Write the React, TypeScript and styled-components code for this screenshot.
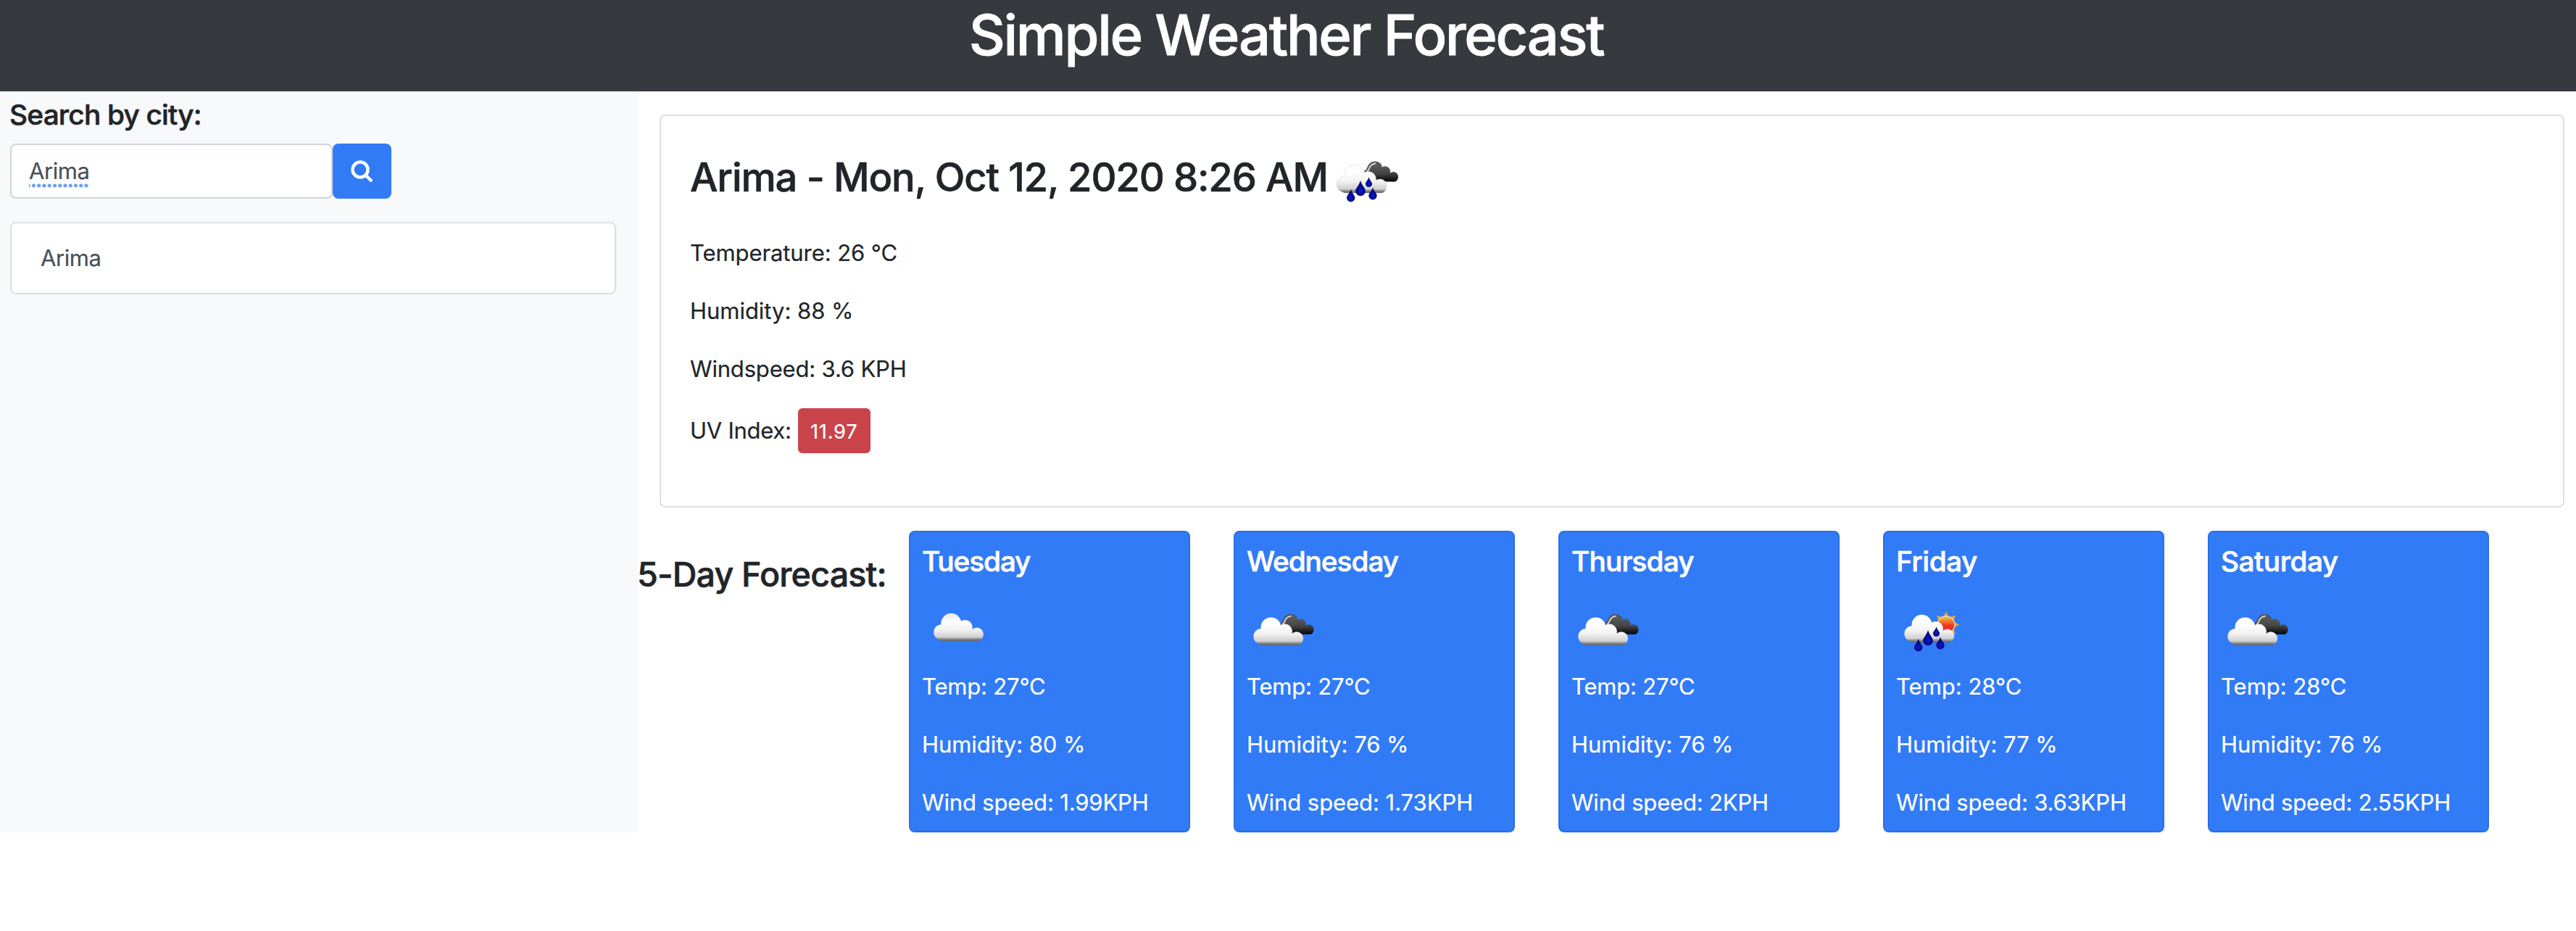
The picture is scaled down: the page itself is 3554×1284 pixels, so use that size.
import React from 'react';
import styled, { createGlobalStyle } from 'styled-components';

const GlobalStyle = createGlobalStyle`
  * { box-sizing: border-box; }
  body {
    margin: 0;
    background: #fff;
    color: #212529;
    font-family: Inter, "Liberation Sans", sans-serif;
    font-size: 31px;
    line-height: 48px;
    -webkit-text-stroke: 0.2px currentColor;
  }
  h1, h3, h4, h5, p { margin: 0; }
  h3, h4, h5 { -webkit-text-stroke: 0.6px currentColor; }
`;

type Tracked = { $track?: number };

const Header = styled.header`
  height: 126px;
  background: #363a3e;
  color: #fff;
  text-align: center;
`;

const Title = styled.h1`
  padding-right: 5px;
  font-size: 77.6px;
  font-weight: 500;
  line-height: 96px;
  letter-spacing: -2.27px;
  -webkit-text-stroke: 0.8px currentColor;
`;

const Layout = styled.main`
  display: flex;
  height: 1022px;
`;

const Sidebar = styled.aside`
  width: 880px;
  flex: none;
  padding: 8px 30px 0 14px;
  background: #f8f9fb;
`;

const SearchTitle = styled.h5`
  margin: 0 0 16px -1px;
  font-size: 38.8px;
  font-weight: 500;
  letter-spacing: -0.8px;
`;

const SearchRow = styled.form`
  display: flex;
  height: 76px;
`;

const Field = styled.div`
  width: 445px;
  padding: 12px 24px;
  border: 2px solid #ced4da;
  border-radius: 8px;
  background: #fff;
  color: #495057;
  letter-spacing: -0.45px;
`;

const Suggested = styled.span`
  display: inline-block;
  height: 48px;
  background: radial-gradient(circle at 3.5px 3px, #6a9ef5 2.2px, transparent 2.9px) 3px 41px / 7.25px 7px repeat-x;
`;

const SearchButton = styled.button`
  display: flex;
  align-items: center;
  justify-content: center;
  width: 81px;
  padding: 0;
  border: 0;
  border-radius: 8px;
  background: #317bf7;
`;

const HistoryItem = styled.div`
  height: 100px;
  margin-top: 32px;
  padding: 24px 40px;
  border: 2px solid #dfdfdf;
  border-radius: 8px;
  background: #fff;
  color: #495057;
  letter-spacing: -0.45px;
`;

const Content = styled.section`
  flex: 1;
  padding: 32px 0 0;
`;

const Current = styled.article`
  height: 542px;
  margin: 0 16px 0 30px;
  padding: 34px 40px;
  border: 2px solid #dfdfdf;
  border-radius: 8px;
`;

const CurrentHeading = styled.h3`
  display: flex;
  height: 100px;
  margin-bottom: 31px;
  padding-top: 17px;
  font-size: 54.3px;
  font-weight: 500;
  line-height: 67px;
  letter-spacing: -1.123px;
  white-space: nowrap;

  svg { margin: -17px 0 0 1px; }
`;

const Reading = styled.p<Tracked>`
  margin-bottom: 32px;
  letter-spacing: ${(p) => p.$track ?? 0}px;
  white-space: nowrap;
`;

const UvRow = styled.p`
  display: flex;
  align-items: baseline;
  gap: 9px;
  margin-top: -2px;
  letter-spacing: -0.26px;
`;

const UvBadge = styled.span`
  width: 100px;
  height: 62px;
  border-radius: 6px;
  background: #c9444a;
  color: #fff;
  font-size: 27.2px;
  line-height: 66px;
  letter-spacing: 0.78px;
  text-align: center;
`;

const Forecast = styled.section`
  display: flex;
  margin-top: 32px;
`;

const ForecastTitle = styled.h4`
  width: 375px;
  flex: none;
  padding-top: 32px;
  margin-left: -1px;
  font-size: 46.6px;
  font-weight: 500;
  line-height: 57.6px;
  letter-spacing: -0.82px;
  white-space: nowrap;
`;

const Days = styled.div`
  display: flex;
  gap: 60px;
`;

const DayCard = styled.article`
  width: 388px;
  height: 416px;
  padding: 16px;
  border: 2px solid #2c6fdf;
  border-radius: 8px;
  background: #317bf7;
  color: #fff;

  svg { display: block; margin: 16px 0 9px; }
`;

const DayName = styled.h5<Tracked>`
  font-size: 38.8px;
  font-weight: 500;
  letter-spacing: ${(p) => p.$track ?? 0}px;
`;

type IconKind = 'cloud' | 'broken' | 'rain' | 'sunRain';

const CloudShape = () => (
  <>
    <circle cx="27" cy="58" r="10.8" />
    <circle cx="40.3" cy="45.8" r="14" />
    <circle cx="59.4" cy="51.3" r="10.4" />
    <circle cx="75.6" cy="60.8" r="9.3" />
    <path d="M19 61 L30 48 L60 46 L72 56 L84 62 Q83.500 69.800 77 70 H27 Q20 68 19 61Z" />
  </>
);

const Drop = ({ x, top, bottom, w }: { x: number; top: number; bottom: number; w: number }) => {
  const r = w / 2;
  const cy = bottom - r;
  return (
    <path
      d={`M${x} ${top} C${x + r * 0.3} ${top + (cy - top) * 0.5} ${x + r} ${cy - r * 0.6} ${x + r} ${cy} A${r} ${r} 0 0 1 ${x - r} ${cy} C${x - r} ${cy - r * 0.6} ${x - r * 0.3} ${top + (cy - top) * 0.5} ${x} ${top}Z`}
      fill="url(#dropFill)"
    />
  );
};

const rays = Array.from({ length: 8 }, (_, i) => {
  const a = (i * Math.PI) / 4;
  const at = (r: number, t: number) => `${69 + r * Math.sin(t)},${47.5 - r * Math.cos(t)}`;
  return `${at(18.5, a)} ${at(11, a + 0.36)} ${at(11, a - 0.36)}`;
});

const placement: Record<IconKind, { front: [number, number]; back?: [number, number] }> = {
  cloud: { front: [0, 0] },
  broken: { front: [-6.8, 5.7], back: [31.5, 9.7] },
  rain: { front: [-4.8, 2], back: [35, 5.4] },
  sunRain: { front: [-4.8, 2] },
};

const WeatherIcon = ({ kind }: { kind: IconKind }) => {
  const { front, back } = placement[kind];
  const raining = kind === 'rain' || kind === 'sunRain';
  const cloudFill = `cloudFill-${kind}`;
  return (
    <svg width="100" height="100" viewBox="0 0 100 100" aria-hidden="true">
      <defs>
        <linearGradient id={cloudFill} gradientUnits="userSpaceOnUse" x1="0" y1="31" x2="0" y2="70">
          <stop offset="0" stopColor={kind === 'cloud' ? '#e6e6e6' : '#ffffff'} />
          <stop offset="0.3" stopColor="#fdfdfd" />
          <stop offset="0.6" stopColor="#f2f2f2" />
          <stop offset="0.86" stopColor="#d0d0d0" />
          <stop offset="0.93" stopColor="#8c8c8c" />
          <stop offset="1" stopColor="#5d6064" />
        </linearGradient>
        <linearGradient id="darkFill" gradientUnits="userSpaceOnUse" x1="0" y1="31" x2="0" y2="70">
          <stop offset="0" stopColor="#666666" />
          <stop offset="0.6" stopColor="#444444" />
          <stop offset="1" stopColor="#050505" />
        </linearGradient>
        <radialGradient id="dropFill" cx="0.5" cy="0.65" r="0.5">
          <stop offset="0" stopColor="#0a1bd0" />
          <stop offset="1" stopColor="#02026e" />
        </radialGradient>
        <linearGradient id="sunFill" x1="0" y1="0" x2="0" y2="1">
          <stop offset="0" stopColor="#f5c542" />
          <stop offset="0.35" stopColor="#f2702c" />
          <stop offset="0.55" stopColor="#f03222" />
          <stop offset="1" stopColor="#ee2a20" />
        </linearGradient>
      </defs>
      {back && (
        <g transform={`translate(${back[0]} ${back[1]}) scale(0.72 0.73)`}>
          <g fill="url(#darkFill)"><CloudShape /></g>
          <path d="M21 52 Q26 48 27 43 Q31 33 41 33.500 Q49 34 52 40" fill="none" stroke="#555" strokeWidth="3" />
          <path d="M25 51 Q29 48 30 43 Q34 36 42 35.500" fill="none" stroke="#d8d8d8" strokeWidth="2.600" />
        </g>
      )}
      {kind === 'sunRain' && (
        <g>
          {rays.map((points) => <polygon key={points} points={points} fill="#e9a23b" />)}
          <circle cx="69" cy="47.500" r="12.500" fill="#f3ddc0" />
          <circle cx="69" cy="47.500" r="11.200" fill="url(#sunFill)" />
        </g>
      )}
      <g transform={`translate(${front[0]} ${front[1]})`}>
        {kind === 'rain' && <g fill="none" stroke="#e2e2e2" strokeWidth="1.400"><CloudShape /></g>}
        <g fill={`url(#${cloudFill})`}><CloudShape /></g>
      </g>
      {raining && (
        <>
          <Drop x={30.7} top={67} bottom={84.5} w={11.3} />
          <Drop x={44} top={55} bottom={76.3} w={13.6} />
          <Drop x={55.5} top={50.5} bottom={64} w={9} />
          <Drop x={61} top={64.5} bottom={81.5} w={11.3} />
        </>
      )}
    </svg>
  );
};

const SearchIcon = () => (
  <svg width="31" height="31" viewBox="0 0 31 31" fill="none" stroke="#fff" aria-hidden="true">
    <circle cx="13" cy="13" r="10.500" strokeWidth="4.400" />
    <path d="M20.500 20.500 L27.700 27.700" strokeWidth="4.400" strokeLinecap="round" />
  </svg>
);

type Line = [string, number];
const days: { name: Line; icon: IconKind; lines: Line[] }[] = [
  { name: ['Tuesday', -1.15], icon: 'cloud', lines: [['Temp: 27°C', -0.19], ['Humidity: 80 %', -0.06], ['Wind speed: 1.99KPH', -0.16]] },
  { name: ['Wednesday', -1.05], icon: 'broken', lines: [['Temp: 27°C', -0.19], ['Humidity: 76 %', -0.02], ['Wind speed: 1.73KPH', -0.05]] },
  { name: ['Thursday', -0.87], icon: 'broken', lines: [['Temp: 27°C', -0.19], ['Humidity: 76 %', -0.02], ['Wind speed: 2KPH', -0.18]] },
  { name: ['Friday', -0.5], icon: 'sunRain', lines: [['Temp: 28°C', 0], ['Humidity: 77 %', -0.03], ['Wind speed: 3.63KPH', -0.16]] },
  { name: ['Saturday', -0.5], icon: 'broken', lines: [['Temp: 28°C', 0], ['Humidity: 76 %', -0.02], ['Wind speed: 2.55KPH', -0.2]] },
];

export default function App() {
  return (
    <>
      <GlobalStyle />
      <Header><Title>Simple Weather Forecast</Title></Header>
      <Layout>
        <Sidebar>
          <SearchTitle>Search by city:</SearchTitle>
          <SearchRow>
            <Field><Suggested>Arima</Suggested></Field>
            <SearchButton type="button" aria-label="Search"><SearchIcon /></SearchButton>
          </SearchRow>
          <HistoryItem>Arima</HistoryItem>
        </Sidebar>
        <Content>
          <Current>
            <CurrentHeading>
              Arima - Mon, Oct 12, 2020 8:26 AM
              <WeatherIcon kind="rain" />
            </CurrentHeading>
            <Reading $track={-0.09}>Temperature: 26 °C</Reading>
            <Reading $track={-0.03}>Humidity: 88 %</Reading>
            <Reading $track={-0.17}>Windspeed: 3.6 KPH</Reading>
            <UvRow>UV Index: <UvBadge>11.97</UvBadge></UvRow>
          </Current>
          <Forecast>
            <ForecastTitle>5-Day Forecast:</ForecastTitle>
            <Days>
              {days.map((day) => (
                <DayCard key={day.name[0]}>
                  <DayName $track={day.name[1]}>{day.name[0]}</DayName>
                  <WeatherIcon kind={day.icon} />
                  {day.lines.map(([text, track]) => <Reading key={text} $track={track}>{text}</Reading>)}
                </DayCard>
              ))}
            </Days>
          </Forecast>
        </Content>
      </Layout>
    </>
  );
}
